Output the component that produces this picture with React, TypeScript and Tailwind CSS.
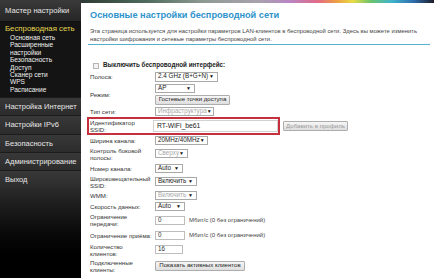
import React from "react";

function Sel({ w, text, disabled }: { w: string; text: string; disabled?: boolean }) {
  return (
    <div className={`${w} h-[9px] border border-[#a9a9a9] bg-white flex items-center justify-between pl-[2px] pr-[3px]`}>
      <span className={`text-[6.3px] leading-none whitespace-nowrap ${disabled ? "text-[#a8a8a8]" : "text-[#222]"}`}>{text}</span>
      <span className="text-[5px] leading-none text-[#111]">▼</span>
    </div>
  );
}

function Btn({ w, text, disabled }: { w: string; text: string; disabled?: boolean }) {
  return (
    <div className={`${w} h-[10px] border border-[#adadad] bg-gradient-to-b from-[#f6f6f6] to-[#dedede] flex items-center justify-center rounded-[1px]`}>
      <span className={`text-[6.1px] leading-none whitespace-nowrap ${disabled ? "text-[#9a9a9a]" : "text-[#222]"}`}>{text}</span>
    </div>
  );
}

function Inp({ w, text }: { w: string; text: string }) {
  return (
    <div className={`${w} h-[9px] border border-[#bdbdbd] bg-white flex items-center pl-[2px]`}>
      <span className="text-[6.3px] leading-none text-[#333]">{text}</span>
    </div>
  );
}

function Row({ h, label, children }: { h: string; label: React.ReactNode; children?: React.ReactNode }) {
  return (
    <div className={`${h} flex items-center`}>
      <div className="w-[65px] shrink-0 text-[6.1px] leading-[7px] text-[#333]">{label}</div>
      <div className="flex items-center gap-[4px]">{children}</div>
    </div>
  );
}

export default function App() {
  const sub = ["Основная сеть", "Расширенные", "настройки", "Безопасность", "Доступ", "Сканер сети", "WPS", "Расписание"];
  const rows = ["Настройка Интернет", "Настройки IPv6", "Безопасность", "Администрирование", "Выход"];
  return (
    <div className="flex w-[434px] h-[278px] overflow-hidden bg-white font-['Liberation_Sans',Arial,sans-serif]">
      <aside className="w-[81px] shrink-0 flex flex-col bg-black text-[#e6e6e6]">
        <div className="h-[22px] flex items-center pl-[5px] bg-gradient-to-b from-[#3a3a3a] to-[#262626] border-b border-[#111] text-[7.6px] whitespace-nowrap">
          Мастер настройки
        </div>
        <div className="h-[75px] bg-[#141414] pl-[5px] pt-[2px] flex flex-col">
          <div className="text-[7.8px] leading-[10px] text-[#e4d752] whitespace-nowrap">Беспроводная сеть</div>
          <div className="pl-[5px] flex flex-col">
            {sub.map((s, i) => (
              <div key={i} className="text-[6.6px] leading-[7.4px] whitespace-nowrap text-[#f0f0f0]">{s}</div>
            ))}
          </div>
        </div>
        {rows.map((r, i) => (
          <div
            key={i}
            className="h-[18.3px] flex items-center pl-[5px] bg-gradient-to-b from-[#383838] to-[#2c2c2c] border-t border-[#1c1c1c] text-[7.5px] whitespace-nowrap"
          >
            {r}
          </div>
        ))}
        <div className="flex-1 bg-gradient-to-b from-[#2a2a2a] to-[#000]" />
      </aside>
      <main className="flex-1 flex flex-col">
        <div className="h-[3px] bg-[linear-gradient(90deg,#2e3a34_0%,#4d6a5c_18%,#8f9a94_35%,#a8a2ac_50%,#b886c4_59%,#e06a88_67%,#ef9a48_72%,#e8dc46_77%,#6cc46a_82%,#40b4cc_88%,#3070b0_94%,#1c1c28_100%)]" />
        <div className="pl-[9px] pr-[4px]">
          <div className="mt-[7px] text-[9.2px] font-bold leading-[11px] text-[#2e93cb] whitespace-nowrap">
            Основные настройки беспроводной сети
          </div>
          <div className="mt-[6px] text-[5.9px] leading-[8px] text-[#444] whitespace-nowrap">
            <div>Эта страница используется для настройки параметров LAN-клиентов в беспроводной сети. Здесь вы можете изменить</div>
            <div>настройки шифрования и сетевые параметры беспроводной сети.</div>
          </div>
          <div className="mt-[1px] -ml-[2px] h-[1px] bg-[#55b0cf]" />
          <div className="mt-[15px] flex flex-col">
            <div className="h-[11px] flex items-center pl-[3px]">
              <div className="w-[6px] h-[6px] border border-[#b5b5b5] bg-[#f4f4f4]" />
              <span className="ml-[4px] text-[6.3px] font-bold leading-none text-[#222] whitespace-nowrap">Выключить беспроводной интерфейс:</span>
            </div>
            <Row h="h-[11px]" label="Полоса:">
              <Sel w="w-[63px] h-[10px]" text="2.4 GHz (B+G+N)" />
            </Row>
            <div className="h-[24px] flex items-center">
              <div className="w-[65px] shrink-0 text-[6.1px] leading-[7px] text-[#333]">Режим:</div>
              <div className="flex flex-col gap-[2px]">
                <Sel w="w-[40px]" text="AP" />
                <Btn w="w-[75px]" text="Гостевые точки доступа" />
              </div>
            </div>
            <Row h="h-[11px]" label="Тип сети:">
              <Sel w="w-[59px]" text="Инфраструктура" disabled />
            </Row>
            <div className="h-[18px] flex items-center">
              <div className="-ml-[3px] w-[193px] h-[18px] border-2 border-[#c62f3e] flex items-center pl-[1px]">
                <div className="w-[63px] shrink-0 text-[6.1px] leading-[7px] text-[#333]">Идентификатор<br />SSID:</div>
                <div className="w-[125px] h-[12px] border border-[#d2d2d2] flex items-center pl-[3px]">
                  <span className="text-[6.8px] leading-none text-[#222]">RT-WiFi_be61</span>
                </div>
              </div>
              <div className="ml-[3px]">
                <Btn w="w-[65px]" text="Добавить в профиль" disabled />
              </div>
            </div>
            <Row h="h-[10px]" label="Ширина канала:">
              <Sel w="w-[53px]" text="20MHz/40MHz" />
            </Row>
            <Row h="h-[17px]" label={<>Контроль боковой<br />полосы:</>}>
              <Sel w="w-[33px]" text="Сверху" disabled />
            </Row>
            <Row h="h-[12px]" label="Номер канала:">
              <Sel w="w-[28px]" text="Auto" />
            </Row>
            <Row h="h-[15px]" label={<>Широковещательный<br />SSID:</>}>
              <Sel w="w-[42px]" text="Включить" />
            </Row>
            <Row h="h-[12px]" label="WMM:">
              <Sel w="w-[42px]" text="Включить" disabled />
            </Row>
            <Row h="h-[11px]" label="Скорость данных:">
              <Sel w="w-[30px]" text="Auto" />
            </Row>
            <Row h="h-[16px]" label={<>Ограничение<br />передачи:</>}>
              <Inp w="w-[30px]" text="0" />
              <span className="text-[6px] leading-none text-[#444] whitespace-nowrap">Мбит/с (0 без ограничений)</span>
            </Row>
            <Row h="h-[14px]" label={<span className="whitespace-nowrap">Ограничение приёма:</span>}>
              <Inp w="w-[30px]" text="0" />
              <span className="text-[6px] leading-none text-[#444] whitespace-nowrap">Мбит/с (0 без ограничений)</span>
            </Row>
            <Row h="h-[15px]" label={<>Количество<br />клиентов:</>}>
              <Inp w="w-[28px]" text="16" />
            </Row>
            <Row h="h-[17px]" label={<>Подключенные<br />клиенты:</>}>
              <Btn w="w-[90px]" text="Показать активных клиентов" />
            </Row>
          </div>
        </div>
      </main>
    </div>
  );
}
